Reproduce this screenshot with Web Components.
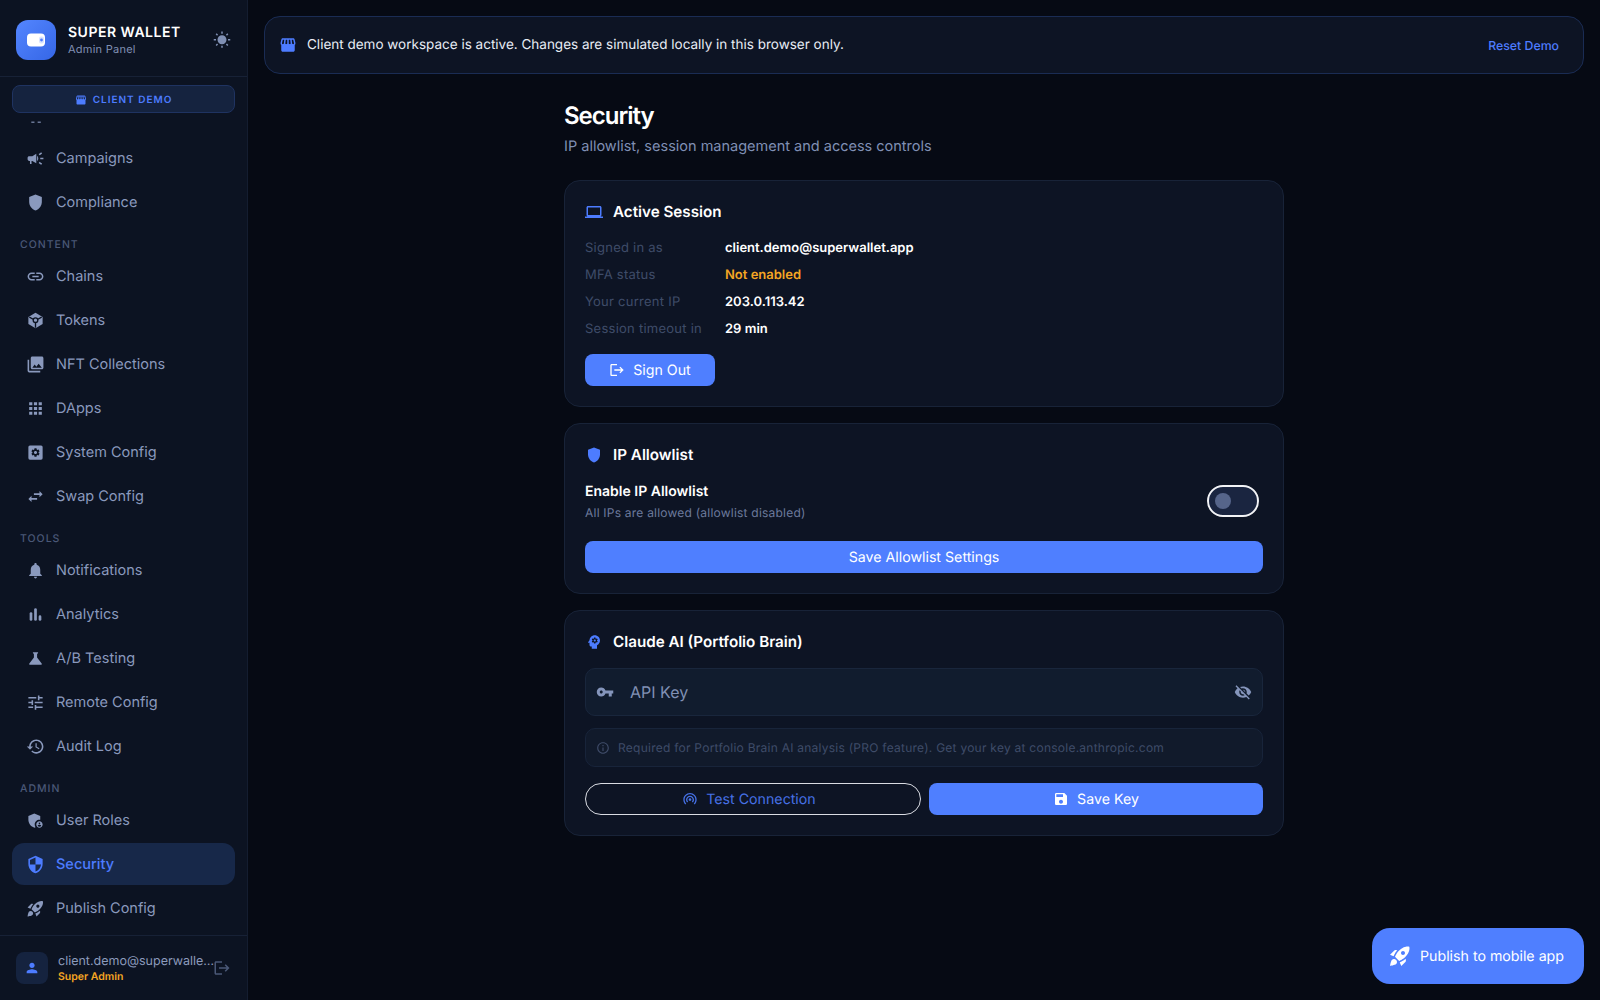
<!DOCTYPE html>
<html lang="en">
<head>
<meta charset="utf-8">
<title>Super Wallet Admin - Security</title>
<style>
  html, body { margin: 0; height: 100%; background: #060a14; }
  body { font-family: Inter, "Noto Sans", sans-serif; color: #fff; overflow: hidden; text-rendering: geometricPrecision; }
</style>
</head>
<body>
<page-shell>
  <side-bar slot="side">
    <nav-section>
      <nav-item icon="dash"></nav-item>
      <nav-item icon="campaign">Campaigns</nav-item>
      <nav-item icon="shield">Compliance</nav-item>
    </nav-section>
    <nav-section label="CONTENT">
      <nav-item icon="link">Chains</nav-item>
      <nav-item icon="token">Tokens</nav-item>
      <nav-item icon="photos">NFT Collections</nav-item>
      <nav-item icon="apps">DApps</nav-item>
      <nav-item icon="settingsbox">System Config</nav-item>
      <nav-item icon="swap">Swap Config</nav-item>
    </nav-section>
    <nav-section label="TOOLS">
      <nav-item icon="bell">Notifications</nav-item>
      <nav-item icon="chart">Analytics</nav-item>
      <nav-item icon="flask">A/B Testing</nav-item>
      <nav-item icon="tune">Remote Config</nav-item>
      <nav-item icon="history">Audit Log</nav-item>
    </nav-section>
    <nav-section label="ADMIN">
      <nav-item icon="adminshield">User Roles</nav-item>
      <nav-item icon="security" active>Security</nav-item>
      <nav-item icon="rocket">Publish Config</nav-item>
    </nav-section>
  </side-bar>

  <demo-banner>Client demo workspace is active. Changes are simulated locally in this browser only.</demo-banner>

  <security-page>
    <sec-card icon="laptop" heading="Active Session">
      <info-row label="Signed in as">client.demo@superwallet.app</info-row>
      <info-row label="MFA status" tone="warn">Not enabled</info-row>
      <info-row label="Your current IP">203.0.113.42</info-row>
      <info-row label="Session timeout in">29 min</info-row>
      <button-row style="margin-top:12px">
        <ui-button icon="logout" style="flex:none;width:130px">Sign Out</ui-button>
      </button-row>
    </sec-card>

    <sec-card icon="shield" heading="IP Allowlist">
      <toggle-row label="Enable IP Allowlist">All IPs are allowed (allowlist disabled)</toggle-row>
      <button-row style="margin-top:20px">
        <ui-button>Save Allowlist Settings</ui-button>
      </button-row>
    </sec-card>

    <sec-card icon="brain" heading="Claude AI (Portfolio Brain)">
      <key-field>API Key</key-field>
      <info-note>Required for Portfolio Brain AI analysis (PRO feature). Get your key at console.anthropic.com</info-note>
      <button-row style="margin-top:16px">
        <ui-button icon="tether" variant="outline">Test Connection</ui-button>
        <ui-button icon="save">Save Key</ui-button>
      </button-row>
    </sec-card>
  </security-page>

  <fab-button slot="overlay">Publish to mobile app</fab-button>
</page-shell>

<script>
const ICONS = {
  dash: '<rect x="6.7" y="21" width="4" height="1.4"/><rect x="14.7" y="21" width="4" height="1.4"/>',
  sun: '<path d="M6.76 4.84l-1.8-1.79-1.41 1.41 1.79 1.79 1.42-1.41zM4 10.5H1v2h3v-2zm9-9.95h-2V3.5h2V.55zm7.45 3.91l-1.41-1.41-1.79 1.79 1.41 1.41 1.79-1.79zm-3.21 13.7l1.79 1.8 1.41-1.41-1.8-1.79-1.4 1.4zM20 10.5v2h3v-2h-3zm-8-5c-3.31 0-6 2.69-6 6s2.69 6 6 6 6-2.69 6-6-2.69-6-6-6zm-1 16.95h2V19.5h-2v2.95zm-7.45-3.91l1.41 1.41 1.79-1.8-1.41-1.41-1.79 1.8z"/>',
  store: '<path d="M21.9 8.89l-1.05-4.37c-.22-.9-1-1.52-1.91-1.52H5.05c-.9 0-1.69.63-1.9 1.52L2.1 8.89c-.24 1.02-.02 2.06.62 2.88.08.11.19.19.28.29V19c0 1.1.9 2 2 2h14c1.1 0 2-.9 2-2v-6.94c.09-.09.2-.18.28-.28.64-.82.87-1.87.62-2.89zm-2.99-3.9l1.05 4.37c.1.42.01.84-.25 1.17-.14.18-.44.47-.94.47-.61 0-1.14-.49-1.21-1.14L16.98 5l1.93-.01zM13 5h1.96l.54 4.52c.05.39-.07.78-.33 1.07-.22.26-.54.41-.95.41-.67 0-1.22-.59-1.22-1.31V5zM8.49 9.52L9.04 5H11v4.69c0 .72-.55 1.31-1.29 1.31-.34 0-.65-.15-.89-.41-.25-.29-.37-.68-.33-1.07zm-4.45-.16L5.05 5h1.97l-.58 4.86c-.08.65-.6 1.14-1.21 1.14-.49 0-.8-.29-.93-.47-.27-.32-.36-.75-.26-1.17z"/><rect x="4.5" y="11" width="15" height="9"/>',
  campaign: '<path d="M18 11v2h4v-2h-4zm-2 6.61c.96.71 2.21 1.65 3.2 2.39.4-.53.8-1.07 1.2-1.6-.99-.74-2.24-1.68-3.2-2.4-.4.54-.8 1.08-1.2 1.61zM20.4 5.6c-.4-.53-.8-1.07-1.2-1.6-.99.74-2.24 1.68-3.2 2.4.4.53.8 1.07 1.2 1.6.96-.72 2.21-1.65 3.2-2.4zM4 9c-1.1 0-2 .9-2 2v2c0 1.1.9 2 2 2h1v4h2v-4h1l5 3V6L8 9H4zm11.5 3c0-1.33-.58-2.53-1.5-3.35v6.69c.92-.81 1.5-2.01 1.5-3.34z"/>',
  shield: '<path d="M12 2 4 5v6.09c0 5.05 3.41 9.76 8 10.91 4.59-1.15 8-5.86 8-10.91V5l-8-3z"/>',
  link: '<path d="M3.9 12c0-1.71 1.39-3.1 3.1-3.1h4V7H7c-2.76 0-5 2.24-5 5s2.24 5 5 5h4v-1.9H7c-1.71 0-3.1-1.39-3.1-3.1zM8 13h8v-2H8v2zm9-6h-4v1.9h4c1.71 0 3.1 1.39 3.1 3.1s-1.39 3.1-3.1 3.1h-4V17h4c2.76 0 5-2.24 5-5s-2.24-5-5-5z"/>',
  token: '<path d="M21 7.5v9l-9 5.25L3 16.5v-9l9-5.25L21 7.5z"/><path d="M4.2 7.8 9.6 10.7M19.8 7.8 14.4 10.7M12 14.6v6.6" fill="none" stroke="#0c1322" stroke-width="1.7"/><circle cx="12" cy="11.6" r="2.9" fill="none" stroke="#0c1322" stroke-width="1.7"/>',
  photos: '<path d="M22 16V4c0-1.1-.9-2-2-2H8c-1.1 0-2 .9-2 2v12c0 1.1.9 2 2 2h12c1.1 0 2-.9 2-2zm-11-4l2.03 2.71L16 11l4 5H8l3-4zM2 6v14c0 1.1.9 2 2 2h14v-2H4V6H2z"/>',
  apps: '<path d="M4 8h4V4H4v4zm6 12h4v-4h-4v4zm-6 0h4v-4H4v4zm0-6h4v-4H4v4zm6 0h4v-4h-4v4zm6-10v4h4V4h-4zm-6 4h4V4h-4v4zm6 6h4v-4h-4v4zm0 6h4v-4h-4v4z"/>',
  settingsbox: '<rect x="3" y="3" width="18" height="18" rx="2"/><path transform="translate(5.4 5.4) scale(.55)" fill="#0c1322" d="M19.14 12.94c.04-.3.06-.61.06-.94 0-.32-.02-.64-.07-.94l2.03-1.58c.18-.14.23-.41.12-.61l-1.92-3.32c-.12-.22-.37-.29-.59-.22l-2.39.96c-.5-.38-1.03-.7-1.62-.94l-.36-2.54c-.04-.24-.24-.41-.48-.41h-3.84c-.24 0-.43.17-.47.41l-.36 2.54c-.59.24-1.13.57-1.62.94l-2.39-.96c-.22-.08-.47 0-.59.22L2.74 8.87c-.12.21-.08.47.12.61l2.03 1.58c-.05.3-.09.63-.09.94s.02.64.07.94l-2.03 1.58c-.18.14-.23.41-.12.61l1.92 3.32c.12.22.37.29.59.22l2.39-.96c.5.38 1.03.7 1.62.94l.36 2.54c.05.24.24.41.48.41h3.84c.24 0 .44-.17.47-.41l.36-2.54c.59-.24 1.13-.56 1.62-.94l2.39.96c.22.08.47 0 .59-.22l1.92-3.32c.12-.22.07-.47-.12-.61l-2.01-1.58zM12 15.6c-1.98 0-3.6-1.62-3.6-3.6s1.62-3.6 3.6-3.6 3.6 1.62 3.6 3.6-1.62 3.6-3.6 3.6z"/>',
  swap: '<path d="M6.99 11L3 15l3.99 4v-3H14v-2H6.99v-3zM21 9l-3.99-4v3H10v2h7.01v3L21 9z"/>',
  bell: '<path d="M12 22c1.1 0 2-.9 2-2h-4c0 1.1.89 2 2 2zm6-6v-5c0-3.07-1.64-5.64-4.5-6.32V4c0-.83-.67-1.5-1.5-1.5s-1.5.67-1.5 1.5v.68C7.63 5.36 6 7.92 6 11v5l-2 2v1h16v-1l-2-2z"/>',
  chart: '<rect x="4.6" y="9" width="3.4" height="11" rx="1.7"/><rect x="10.3" y="4" width="3.4" height="16" rx="1.7"/><rect x="16" y="13" width="3.4" height="7" rx="1.7"/>',
  flask: '<path d="M19.8 18.4L14 10.67V6.5l1.35-1.69c.26-.33.03-.81-.39-.81H9.04c-.42 0-.65.48-.39.81L10 6.5v4.17L4.2 18.4c-.49.66-.02 1.6.8 1.6h14c.82 0 1.29-.94.8-1.6z"/>',
  tune: '<path d="M3 17v2h6v-2H3zM3 5v2h10V5H3zm10 16v-2h8v-2h-8v-2h-2v6h2zM7 9v2H3v2h4v2h2V9H7zm14 4v-2H11v2h10zm-6-4h2V7h4V5h-4V3h-2v6z"/>',
  history: '<path d="M13 3c-4.97 0-9 4.03-9 9H1l3.89 3.89.07.14L9 12H6c0-3.87 3.13-7 7-7s7 3.13 7 7-3.13 7-7 7c-1.93 0-3.68-.79-4.94-2.06l-1.42 1.42C8.27 19.99 10.51 21 13 21c4.97 0 9-4.03 9-9s-4.03-9-9-9zm-1 5v5l4.28 2.54.72-1.21-3.5-2.08V8H12z"/>',
  adminshield: '<path d="M17 11c.34 0 .67.04 1 .09V6.27L10.5 3 3 6.27v4.91c0 4.54 3.2 8.79 7.5 9.82.55-.13 1.08-.32 1.6-.55-.69-.98-1.1-2.17-1.1-3.45 0-3.31 2.69-6 6-6z"/><path d="M17 13c-2.21 0-4 1.79-4 4s1.79 4 4 4 4-1.79 4-4-1.79-4-4-4zm0 1.38c.62 0 1.12.51 1.12 1.12s-.51 1.12-1.12 1.12-1.12-.51-1.12-1.12.5-1.12 1.12-1.12zm0 5.37c-.93 0-1.74-.46-2.24-1.17.05-.72 1.51-1.08 2.24-1.08s2.19.36 2.24 1.08c-.5.71-1.31 1.17-2.24 1.17z"/>',
  security: '<path d="M12 1L3 5v6c0 5.55 3.84 10.74 9 12 5.16-1.26 9-6.45 9-12V5l-9-4zm0 10.99h7c-.53 4.12-3.28 7.79-7 8.94V12H5V6.3l7-3.11v8.8z"/>',
  rocket: '<path d="M9.19 6.35c-2.04 2.29-3.44 5.58-3.57 5.89L2 10.69l4.05-4.05c.47-.47 1.15-.68 1.81-.55l1.33.26zM11.17 17s3.74-1.55 5.89-3.7c5.4-5.4 4.5-9.62 4.21-10.57-.95-.3-5.17-1.19-10.57 4.21C8.55 9.09 7 12.83 7 12.83L11.17 17zm6.48-2.19c-2.29 2.04-5.58 3.44-5.89 3.57L13.31 22l4.05-4.05c.47-.47.68-1.15.55-1.81l-.26-1.33zM9 18c0 .83-.34 1.58-.88 2.12C6.94 21.3 2 22 2 22s.7-4.94 1.88-6.12C4.42 15.34 5.17 15 6 15c1.66 0 3 1.34 3 3zm4-9c0-1.1.9-2 2-2s2 .9 2 2-.9 2-2 2-2-.9-2-2z"/>',
  person: '<path d="M12 12c2.21 0 4-1.79 4-4s-1.79-4-4-4-4 1.79-4 4 1.79 4 4 4zm0 2c-2.67 0-8 1.34-8 4v2h16v-2c0-2.66-5.33-4-8-4z"/>',
  logout: '<path d="M17 7l-1.41 1.41L18.17 11H8v2h10.17l-2.58 2.58L17 17l5-5zM4 5h8V3H4c-1.1 0-2 .9-2 2v14c0 1.1.9 2 2 2h8v-2H4V5z"/>',
  laptop: '<path d="M20 18c1.1 0 1.99-.9 1.99-2L22 6c0-1.1-.9-2-2-2H4c-1.1 0-2 .9-2 2v10c0 1.1.9 2 2 2H0v2h24v-2h-4zM4 6h16v10H4V6z"/>',
  brain: '<path d="M13 8.57c-.79 0-1.43.64-1.43 1.43s.64 1.43 1.43 1.43 1.43-.64 1.43-1.43-.64-1.43-1.43-1.43z"/><path d="M13 3C9.25 3 6.2 5.94 6.02 9.64L4.1 12.2c-.25.33-.01.8.4.8H6v3c0 1.1.9 2 2 2h1v3h7v-4.68c2.36-1.12 4-3.53 4-6.32 0-3.87-3.13-7-7-7zm3 7c0 .13-.01.26-.02.39l.83.66c.08.06.1.16.05.25l-.8 1.39c-.05.09-.16.12-.24.09l-.99-.4c-.21.16-.43.29-.67.39L14 13.83c-.01.1-.1.17-.2.17h-1.6c-.1 0-.18-.07-.2-.17l-.15-1.06c-.25-.1-.47-.23-.68-.39l-.99.4c-.09.03-.2 0-.25-.09l-.8-1.39c-.05-.08-.03-.19.05-.25l.84-.66c-.01-.13-.02-.26-.02-.39s.02-.27.04-.39l-.85-.66c-.08-.06-.1-.16-.05-.26l.8-1.38c.05-.09.15-.12.24-.09l1 .4c.2-.15.43-.29.67-.39L12 6.17c.02-.1.1-.17.2-.17h1.6c.1 0 .18.07.2.17l.15 1.06c.24.1.46.23.67.39l1-.4c.09-.03.2 0 .24.09l.8 1.38c.05.09.03.2-.05.26l-.85.66c.03.12.04.25.04.39z"/>',
  key: '<path d="M12.65 10C11.83 7.67 9.61 6 7 6c-3.31 0-6 2.69-6 6s2.69 6 6 6c2.61 0 4.83-1.67 5.65-4H17v4h4v-4h2v-4H12.65zM7 14c-1.1 0-2-.9-2-2s.9-2 2-2 2 .9 2 2-.9 2-2 2z"/>',
  eyeoff: '<path d="M12 7c2.76 0 5 2.24 5 5 0 .65-.13 1.26-.36 1.83l2.92 2.92c1.51-1.26 2.7-2.89 3.43-4.75-1.73-4.39-6-7.5-11-7.5-1.4 0-2.74.25-3.98.7l2.16 2.16C10.74 7.13 11.35 7 12 7zM2 4.27l2.28 2.28.46.46C3.08 8.3 1.78 10.02 1 12c1.73 4.39 6 7.5 11 7.5 1.55 0 3.03-.3 4.38-.84l.42.42L19.73 22 21 20.73 3.27 3 2 4.27zM7.53 9.8l1.55 1.55c-.05.21-.08.43-.08.65 0 1.66 1.34 3 3 3 .22 0 .44-.03.65-.08l1.55 1.55c-.67.33-1.41.53-2.2.53-2.76 0-5-2.24-5-5 0-.79.2-1.53.53-2.2zm4.31-.78l3.15 3.15.02-.16c0-1.66-1.34-3-3-3l-.17.01z"/>',
  info: '<path d="M11 7h2v2h-2zm0 4h2v6h-2zm1-9C6.48 2 2 6.48 2 12s4.48 10 10 10 10-4.48 10-10S17.52 2 12 2zm0 18c-4.41 0-8-3.59-8-8s3.59-8 8-8 8 3.59 8 8-3.59 8-8 8z"/>',
  tether: '<path d="M12 11c-1.1 0-2 .9-2 2 0 .55.23 1.05.59 1.41.36.36.86.59 1.41.59s1.05-.23 1.41-.59c.36-.36.59-.86.59-1.41 0-1.1-.9-2-2-2zm6 2c0-3.31-2.69-6-6-6s-6 2.69-6 6c0 1.66.68 3.15 1.76 4.24l1.42-1.42C8.45 15.1 8 14.11 8 13c0-2.21 1.79-4 4-4s4 1.79 4 4c0 1.11-.45 2.1-1.18 2.82l1.42 1.42C17.32 16.15 18 14.66 18 13zM12 3C6.48 3 2 7.48 2 13c0 2.76 1.12 5.26 2.93 7.07l1.42-1.42C4.9 17.21 4 15.21 4 13c0-4.42 3.58-8 8-8s8 3.58 8 8c0 2.21-.9 4.21-2.35 5.65l1.42 1.42C20.88 18.26 22 15.76 22 13c0-5.52-4.48-10-10-10z"/>',
  save: '<path d="M17 3H5c-1.11 0-2 .9-2 2v14c0 1.1.89 2 2 2h14c1.1 0 2-.9 2-2V7l-4-4zm-5 16c-1.66 0-3-1.34-3-3s1.34-3 3-3 3 1.34 3 3-1.34 3-3 3zm3-10H5V5h10v4z"/>'
};

// small helper, every element below is just markup + styles in an open root
class Base extends HTMLElement {
  render(html) {
    this.attachShadow({ mode: 'open' });
    this.shadowRoot.innerHTML = html;
  }
}

class AppIcon extends Base {
  constructor() { super(); this.attachShadow({ mode: 'open' }); }
  connectedCallback() {
    const size = this.getAttribute('size') || 18;
    this.shadowRoot.innerHTML = `
      <style>:host { display: inline-flex; flex: none; width: ${size}px; height: ${size}px; } svg { display: block; fill: currentColor; }</style>
      <svg width="${size}" height="${size}" viewBox="0 0 24 24">${ICONS[this.getAttribute('name')] || ''}</svg>`;
  }
}

class PageShell extends Base {
  constructor() {
    super();
    this.render(`
      <style>
        :host { display: flex; height: 100vh; position: relative; background: #060a14; overflow: hidden; }
        main { flex: 1; min-width: 0; padding: 16px; display: flex; flex-direction: column; }
      </style>
      <slot name="side"></slot>
      <main><slot></slot></main>
      <slot name="overlay"></slot>`);
  }
}

class SideBar extends Base {
  constructor() {
    super();
    this.render(`
      <style>
        :host { display: flex; flex-direction: column; flex: none; width: 248px; height: 100vh; box-sizing: border-box; background: #0c1322; border-right: 1px solid #141d30; }
        header { display: flex; align-items: center; height: 77px; box-sizing: border-box; padding: 4px 16px 0; border-bottom: 1px solid #172136; }
        .logo { width: 40px; height: 40px; border-radius: 12px; background: linear-gradient(135deg, #5486ff, #3566e6); display: flex; align-items: center; justify-content: center; flex: none; }
        .brand { margin-left: 12px; flex: 1; min-width: 0; }
        .name { font-size: 14px; line-height: 17px; font-weight: 600; letter-spacing: .5px; color: #fff; }
        .sub { font-size: 11px; line-height: 14px; margin-top: 1px; color: #8090b4; letter-spacing: .25px; }
        .sun { color: #8090b4; display: flex; }
        .badge-wrap { padding: 8px 12px 7px; }
        .badge { height: 28px; box-sizing: border-box; padding-top: 1px; border: 1px solid #1f3361; border-radius: 8px; background: #15233f; display: flex; align-items: center; justify-content: center; gap: 6px; color: #4d7cff; font-size: 10px; font-weight: 600; letter-spacing: 1px; }
        nav { flex: 1; min-height: 0; overflow: hidden; padding: 0 12px; }
        .scroll { margin-top: -27px; }
        footer { height: 65px; box-sizing: border-box; border-top: 1px solid #172136; padding: 0 16px; display: flex; align-items: center; gap: 10px; }
        .avatar { width: 32px; height: 32px; border-radius: 8px; background: #15233f; color: #4d7cff; display: flex; align-items: center; justify-content: center; flex: none; }
        .who { flex: 1; min-width: 0; padding-top: 2px; }
        .mail { font-size: 12.5px; line-height: 16px; color: #8c9bbd; white-space: nowrap; }
        .role { font-size: 10.5px; line-height: 14px; margin-top: .5px; font-weight: 600; color: #f5a623; }
        .out { color: #4a5877; display: flex; margin-left: -10px; }
      </style>
      <header>
        <div class="logo">
          <svg width="20" height="16" viewBox="0 0 20 16"><rect x="1" y="1.5" width="18" height="13" rx="4" fill="#fff"/><rect x="13" y="4.5" width="5" height="7" rx="2" fill="#d9e4ff"/><circle cx="15.5" cy="8" r="1.4" fill="#4d7cff"/></svg>
        </div>
        <div class="brand">
          <div class="name">SUPER WALLET</div>
          <div class="sub">Admin Panel</div>
        </div>
        <span class="sun"><app-icon name="sun" size="18"></app-icon></span>
      </header>
      <div class="badge-wrap">
        <div class="badge"><app-icon name="store" size="12"></app-icon>CLIENT DEMO</div>
      </div>
      <nav><div class="scroll"><slot></slot></div></nav>
      <footer>
        <div class="avatar"><app-icon name="person" size="16"></app-icon></div>
        <div class="who">
          <div class="mail">client.demo@superwalle…</div>
          <div class="role">Super Admin</div>
        </div>
        <span class="out"><app-icon name="logout" size="18"></app-icon></span>
      </footer>`);
  }
}

class NavSection extends Base {
  constructor() { super(); this.attachShadow({ mode: 'open' }); }
  connectedCallback() {
    const label = this.getAttribute('label');
    this.shadowRoot.innerHTML = `
      <style>
        :host { display: block; }
        .label { height: 30px; box-sizing: border-box; padding: 13px 0 0 8px; font-size: 10.5px; line-height: 14px; font-weight: 500; letter-spacing: 1px; color: #4a5877; }
      </style>
      ${label ? `<div class="label">${label}</div>` : ''}
      <slot></slot>`;
  }
}

class NavItem extends Base {
  constructor() { super(); this.attachShadow({ mode: 'open' }); }
  connectedCallback() {
    this.shadowRoot.innerHTML = `
      <style>
        :host { display: flex; align-items: center; gap: 11.5px; height: 42px; margin-bottom: 2px; padding: 0 13.5px; border-radius: 12px; color: #8a99bd; font-size: 14.5px; }
        :host([active]) { background: #172849; color: #4d7cff; font-weight: 500; }
      </style>
      <app-icon name="${this.getAttribute('icon')}" size="19"></app-icon>
      <span><slot></slot></span>`;
  }
}

class DemoBanner extends Base {
  constructor() {
    super();
    this.render(`
      <style>
        :host { display: flex; align-items: center; height: 58px; box-sizing: border-box; flex: none; padding: 0 24px 0 14px; background: #0d1424; border: 1px solid #1a2c54; border-radius: 16px; font-size: 13.5px; color: #e8ecf5; }
        .ic { color: #4d7cff; display: flex; margin-right: 10px; }
        .txt { flex: 1; }
        a { color: #4d7cff; font-size: 12.3px; font-weight: 500; }
      </style>
      <span class="ic"><app-icon name="store" size="18"></app-icon></span>
      <span class="txt"><slot></slot></span>
      <a>Reset Demo</a>`);
  }
}

class SecurityPage extends Base {
  constructor() {
    super();
    this.render(`
      <style>
        :host { display: block; width: 720px; margin: 0 auto; padding-top: 26px; }
        h1 { margin: 0; font-size: 24px; line-height: 32px; font-weight: 600; letter-spacing: -1px; color: #fff; }
        p { margin: 5px 0 0; font-size: 14.5px; line-height: 20px; color: #8090b4; }
        .stack { display: flex; flex-direction: column; gap: 16px; margin-top: 23px; }
      </style>
      <h1>Security</h1>
      <p>IP allowlist, session management and access controls</p>
      <div class="stack"><slot></slot></div>`);
  }
}

class SecCard extends Base {
  constructor() { super(); this.attachShadow({ mode: 'open' }); }
  connectedCallback() {
    this.shadowRoot.innerHTML = `
      <style>
        :host { display: block; box-sizing: border-box; background: #0d1424; border: 1px solid #182338; border-radius: 16px; padding: 21px 20px 20px; }
        .head { display: flex; align-items: center; gap: 10px; height: 20px; margin-bottom: 12px; }
        .ic { color: #4d7cff; display: flex; }
        h2 { margin: 0; font-size: 15.2px; line-height: 20px; font-weight: 600; color: #fff; }
      </style>
      <div class="head">
        <span class="ic"><app-icon name="${this.getAttribute('icon')}" size="18"></app-icon></span>
        <h2>${this.getAttribute('heading')}</h2>
      </div>
      <slot></slot>`;
  }
}

class InfoRow extends Base {
  constructor() { super(); this.attachShadow({ mode: 'open' }); }
  connectedCallback() {
    const warn = this.getAttribute('tone') === 'warn';
    this.shadowRoot.innerHTML = `
      <style>
        :host { display: flex; align-items: center; height: 27px; font-size: 13px; }
        .k { width: 140px; flex: none; color: #3f4c69; letter-spacing: .25px; }
        .v { font-weight: 600; color: ${warn ? '#f5a623' : '#fff'}; }
      </style>
      <span class="k">${this.getAttribute('label')}</span>
      <span class="v"><slot></slot></span>`;
  }
}

class ButtonRow extends Base {
  constructor() {
    super();
    this.render(`<style>:host { display: flex; gap: 8px; }</style><slot></slot>`);
  }
}

class UiButton extends Base {
  constructor() { super(); this.attachShadow({ mode: 'open' }); }
  connectedCallback() {
    const icon = this.getAttribute('icon');
    this.shadowRoot.innerHTML = `
      <style>
        :host { display: flex; flex: 1 1 0; align-items: center; justify-content: center; gap: 8px; height: 32px; box-sizing: border-box; border-radius: 8px; background: #4f7fff; color: #fff; font-size: 14.2px; font-weight: 400; }
        :host([variant="outline"]) { background: transparent; border: 1.5px solid #d9dce3; border-radius: 16px; color: #4671e6; }
        :host([variant="outline"]) span { margin-right: 8px; }
      </style>
      ${icon ? `<app-icon name="${icon}" size="16"></app-icon>` : ''}
      <span><slot></slot></span>`;
  }
}

class ToggleRow extends Base {
  constructor() { super(); this.attachShadow({ mode: 'open' }); }
  connectedCallback() {
    this.shadowRoot.innerHTML = `
      <style>
        :host { display: flex; align-items: center; justify-content: space-between; padding-top: 4px; }
        .txt { padding-top: 1px; }
        .t { font-size: 14px; line-height: 20px; font-weight: 600; color: #fff; }
        .s { font-size: 12px; line-height: 16px; margin-top: 3px; color: #6c7a9c; letter-spacing: .22px; }
        .sw { width: 52px; height: 32px; box-sizing: border-box; margin-right: 4px; border: 2px solid #f2f3f6; border-radius: 16px; background: #1a2540; display: flex; align-items: center; padding-left: 6px; }
        .sw i { width: 16px; height: 16px; border-radius: 50%; background: #56658a; display: block; }
      </style>
      <div class="txt">
        <div class="t">${this.getAttribute('label')}</div>
        <div class="s"><slot></slot></div>
      </div>
      <div class="sw"><i></i></div>`;
  }
}

class KeyField extends Base {
  constructor() {
    super();
    this.render(`
      <style>
        :host { display: flex; align-items: center; height: 48px; box-sizing: border-box; padding: 0 10px; margin-top: 16px; background: #111c2e; border: 1px solid #19263c; border-radius: 10px; color: #8090b4; font-size: 16px; }
        span.t { flex: 1; margin-left: 16px; }
        app-icon { color: #8595bb; }
      </style>
      <app-icon name="key" size="18"></app-icon>
      <span class="t"><slot></slot></span>
      <app-icon name="eyeoff" size="18"></app-icon>`);
  }
}

class InfoNote extends Base {
  constructor() {
    super();
    this.render(`
      <style>
        :host { display: flex; align-items: center; gap: 8px; height: 39px; box-sizing: border-box; padding: 0 10px; margin-top: 12px; background: #111a2b; border: 1px solid #18243a; border-radius: 10px; color: #3f4c69; font-size: 12px; letter-spacing: .25px; }
      </style>
      <app-icon name="info" size="14"></app-icon>
      <span><slot></slot></span>`);
  }
}

class FabButton extends Base {
  constructor() {
    super();
    this.render(`
      <style>
        :host { position: absolute; right: 16px; bottom: 16px; display: flex; align-items: center; gap: 8px; height: 56px; width: 212px; box-sizing: border-box; padding-left: 16px; border-radius: 18px; background: #4f7fff; color: #fff; font-size: 14.2px; font-weight: 400; }
      </style>
      <app-icon name="rocket" size="24"></app-icon>
      <span><slot></slot></span>`);
  }
}

customElements.define('app-icon', AppIcon);
customElements.define('page-shell', PageShell);
customElements.define('side-bar', SideBar);
customElements.define('nav-section', NavSection);
customElements.define('nav-item', NavItem);
customElements.define('demo-banner', DemoBanner);
customElements.define('security-page', SecurityPage);
customElements.define('sec-card', SecCard);
customElements.define('info-row', InfoRow);
customElements.define('button-row', ButtonRow);
customElements.define('ui-button', UiButton);
customElements.define('toggle-row', ToggleRow);
customElements.define('key-field', KeyField);
customElements.define('info-note', InfoNote);
customElements.define('fab-button', FabButton);
</script>
</body>
</html>
